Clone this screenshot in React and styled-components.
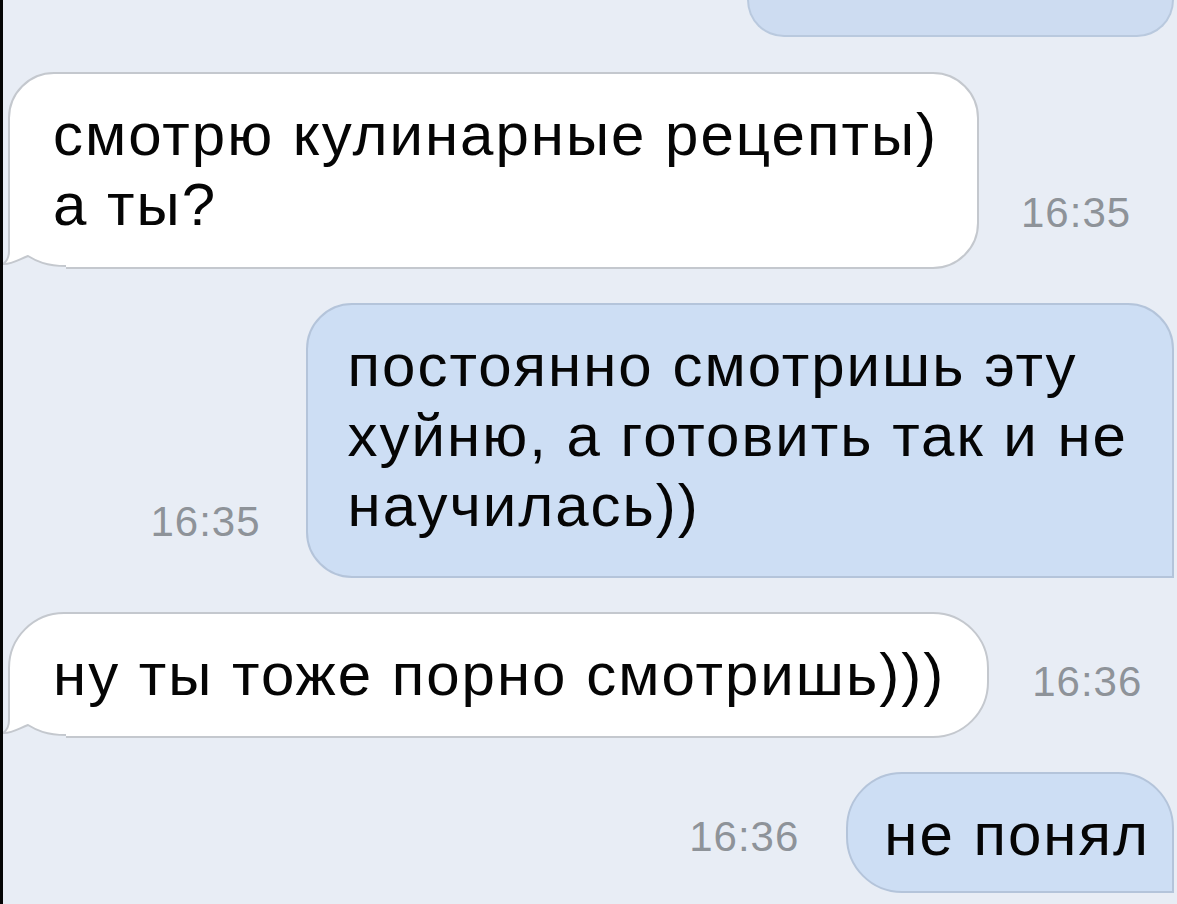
import React from "react";
import styled, { createGlobalStyle } from "styled-components";

const Global = createGlobalStyle`
  html, body { margin: 0; padding: 0; background: #e8edf5; }
  body { font-family: "Liberation Sans", Arial, sans-serif; }
`;

const Page = styled.div`
  width: 1177px;
  height: 904px;
  overflow: hidden;
  box-sizing: border-box;
  background: #e8edf5;
  border-left: 3px solid #050505;
  padding: 0 3px 0 5px;
  display: flex;
  flex-direction: column;
  gap: 34px;
`;

const PartialBubble = styled.div`
  align-self: flex-end;
  width: 427px;
  height: 37px;
  flex-shrink: 0;
  box-sizing: border-box;
  background: #cddcf1;
  border: 2px solid #b9c9de;
  border-top: none;
  border-radius: 0 0 42px 42px;
  margin-bottom: 1px;
`;

const Row = styled.div`
  display: flex;
  align-items: flex-end;
  gap: ${(p) => p.$gap}px;
  justify-content: ${(p) => (p.$out ? "flex-end" : "flex-start")};
  flex-shrink: 0;
`;

const Bubble = styled.div`
  position: relative;
  box-sizing: border-box;
  padding: 26px ${(p) => p.$pr}px ${(p) => p.$pb}px ${(p) => p.$pl}px;
  background: ${(p) => (p.$out ? "#cddef4" : "#ffffff")};
  border: 2px solid ${(p) => (p.$out ? "#b4c4da" : "#c4c8ce")};
  border-radius: ${(p) => p.$r}px;
  border-bottom-left-radius: ${(p) => (p.$out ? `${p.$r}px` : "0")};
  border-bottom-right-radius: ${(p) => (p.$out ? "0" : `${p.$r}px`)};
  color: #050505;
  font-family: "Liberation Sans", Arial, sans-serif;
  font-size: 60px;
  line-height: 70px;
  letter-spacing: 2px;
  white-space: nowrap;
`;

const Time = styled.div`
  font-family: "Liberation Sans", Arial, sans-serif;
  font-size: 42px;
  line-height: 1;
  letter-spacing: 1px;
  color: #8e9399;
  margin-bottom: 35px;
  flex-shrink: 0;
`;

const TailSvg = styled.svg`
  position: absolute;
  left: -8px;
  bottom: -2px;
  width: 64px;
  height: 36px;
  overflow: visible;
`;

function Tail() {
  return (
    <TailSvg viewBox="0 0 64 36">
      <rect x="-2" y="14" width="66" height="24" fill="#e8edf5" />
      <path
        d="M7 0 L7 18 C7 25 4 29 1 31 C8 32 16 27 26 23 C34 28 44 33 64 33 L64 0 Z"
        fill="#ffffff"
      />
      <path
        d="M7 0 L7 18 C7 25 4 29 1 31 C8 32 16 27 26 23 C34 28 44 33 64 33"
        fill="none"
        stroke="#c4c8ce"
        strokeWidth="2"
      />
    </TailSvg>
  );
}

function Incoming({ time, pr, pb, gap, r, children }) {
  return (
    <Row $gap={gap}>
      <Bubble $pl={43} $pr={pr} $pb={pb} $r={r}>
        {children}
        <Tail />
      </Bubble>
      <Time>{time}</Time>
    </Row>
  );
}

function Outgoing({ time, pl, pr, pb, gap, r, children }) {
  return (
    <Row $out $gap={gap}>
      <Time>{time}</Time>
      <Bubble $out $pl={pl} $pr={pr} $pb={pb} $r={r}>
        {children}
      </Bubble>
    </Row>
  );
}

export default function App() {
  return (
    <>
      <Global />
      <Page>
        <PartialBubble />
        <Incoming time="16:35" pr={39} pb={27} gap={42} r={46}>
          смотрю кулинарные рецепты)
          <br />а ты?
        </Incoming>
        <Outgoing time="16:35" pl={40} pr={44} pb={35} gap={45} r={46}>
          постоянно смотришь эту
          <br />
          хуйню, а готовить так и не
          <br />
          научилась))
        </Outgoing>
        <Incoming time="16:36" pr={42} pb={26} gap={43} r={56}>
          ну ты тоже порно смотришь)))
        </Incoming>
        <Outgoing time="16:36" pl={36} pr={22} pb={21} gap={47} r={56}>
          не понял
        </Outgoing>
      </Page>
    </>
  );
}
